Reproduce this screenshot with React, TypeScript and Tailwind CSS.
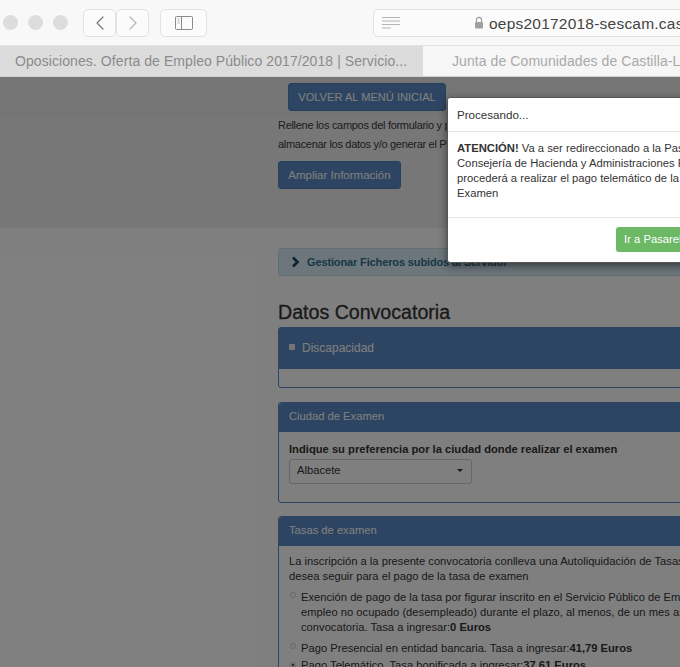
import React from 'react';
import { ChevronLeft, ChevronRight } from 'lucide-react';

const font = { fontFamily: '"Liberation Sans", Arial, sans-serif' };

const BrowserBar: React.FC = () => (
  <div className="flex items-center h-[46px] bg-[#f8f8f8] pl-[3px] border-b border-[#e4e4e4]">
    {/* Traffic lights */}
    <div className="flex gap-[10px] shrink-0">
      <span className="w-[15px] h-[15px] rounded-full bg-[#dddddd]" />
      <span className="w-[15px] h-[15px] rounded-full bg-[#dddddd]" />
      <span className="w-[15px] h-[15px] rounded-full bg-[#dddddd]" />
    </div>

    {/* Back / forward */}
    <div className="flex ml-[15px] shrink-0">
      <div className="w-[33px] h-[28px] flex items-center justify-center border border-[#e2e2e2] rounded-[5px] bg-[#fbfbfb]">
        <ChevronLeft className="w-[24px] h-[24px] text-[#777777]" strokeWidth={1.2} />
      </div>
      <div className="w-[33px] h-[28px] flex items-center justify-center border border-[#e2e2e2] rounded-[5px] bg-[#fbfbfb]">
        <ChevronRight className="w-[24px] h-[24px] text-[#b5b5b5]" strokeWidth={1.2} />
      </div>
    </div>

    {/* Sidebar toggle */}
    <div className="w-[47px] h-[28px] ml-[11px] shrink-0 flex items-center justify-center border border-[#e2e2e2] rounded-[5px] bg-[#fbfbfb]">
      <svg width="20" height="16" viewBox="0 0 20 16" fill="none">
        <rect x="1.5" y="1.5" width="17" height="13" rx="1" stroke="#8a8a8a" />
        <path d="M7.5 1.5v13" stroke="#8a8a8a" />
        <path d="M3.5 4h2M3.5 6h2M3.5 8h2" stroke="#b0b0b0" />
      </svg>
    </div>

    {/* Address field */}
    <div className="flex items-center ml-[166px] w-[340px] shrink-0 h-[28px] border border-[#e2e2e2] rounded-[5px] bg-[#fbfbfb]">
      <svg className="ml-[8px] shrink-0" width="19" height="14" viewBox="0 0 19 14" fill="none">
        <path d="M0 1.5h18M0 5h18M0 8.5h18M0 12h9" stroke="#b4b4b4" />
      </svg>
      <svg className="ml-[73px] shrink-0" width="10" height="13" viewBox="0 0 10 13" fill="none">
        <path d="M2.5 6V3.8a2.5 2.5 0 0 1 5 0V6" stroke="#a0a0a0" strokeWidth="1.2" />
        <rect x="1" y="6" width="8" height="6.5" rx="1" fill="#a0a0a0" />
      </svg>
      <span className="ml-[5px] pt-[2px] text-[15.5px] tracking-[0.22px] text-[#444444] whitespace-nowrap">oeps20172018-sescam.castillalamancha.es</span>
    </div>
  </div>
);

const Tabs: React.FC = () => (
  <div className="flex h-[31px] bg-[#dcdcdc] border-b border-[#d0d0d0]">
    <div className="w-[423px] shrink-0 flex items-center pl-[15px] pt-[1px] text-[14px] tracking-[0.08px] text-[#8b8b8b] whitespace-nowrap">
      Oposiciones. Oferta de Empleo Público 2017/2018 | Servicio...
    </div>
    <div className="flex-1 flex items-center pl-[29px] pt-[1px] bg-[#f6f6f6] text-[14px] tracking-[0.08px] text-[#a9a9a9] whitespace-nowrap overflow-hidden">
      Junta de Comunidades de Castilla-La Mancha
    </div>
  </div>
);

const PanelHeading: React.FC<{ title: string }> = ({ title }) => (
  <div className="h-[29px] flex items-center pl-[10px] pb-[2px] bg-[#5b8bc4] text-white text-[11.2px] rounded-t-[3px]">{title}</div>
);

const Page: React.FC = () => (
  <div className="relative flex-1 overflow-hidden bg-white text-[#333333] text-[11.2px]">
    {/* Top strip + intro block */}
    <div className="bg-[#eeeeee] h-[151px]">
      <div className="h-[39px] pt-[6px] pl-[288px] bg-[#ebebeb]">
        <button className="h-[28px] w-[158px] rounded-[3px] bg-[#5b8bc4] border border-[#4d7fbd] text-white text-[11.1px]">
          VOLVER AL MENÚ INICIAL
        </button>
      </div>
      <div className="pl-[278px] w-[1000px] text-[#3a3a3a] text-[11px] tracking-[-0.3px] leading-[19px]">
        <p>Rellene los campos del formulario y pulse los botones de la parte inferior para</p>
        <p>almacenar los datos y/o generar el PDF de la solicitud</p>
        <button className="mt-[7px] h-[28px] w-[123px] rounded-[3px] bg-[#5b8bc4] border border-[#4d7fbd] text-white text-[11.5px] tracking-normal">
          Ampliar Información
        </button>
      </div>
    </div>

    <div className="pl-[278px] w-[1000px]">
      {/* Collapsible files bar */}
      <div className="mt-[20px] h-[28px] w-[700px] flex items-center pl-[12px] bg-[#d9edf7] border border-[#bcdff1] rounded-[3px] text-[#31708f] font-bold text-[11px] tracking-[-0.13px]">
        <svg className="shrink-0" width="10" height="12" viewBox="0 0 10 12" fill="none">
          <path d="M2 1.5 6.5 6 2 10.5" stroke="#1f4763" strokeWidth="2.6" />
        </svg>
        <span className="ml-[6px]">Gestionar Ficheros subidos al Servidor</span>
      </div>

      <h2 className="mt-[25px] text-[19.6px] leading-[23px] font-medium text-[#333333] [-webkit-text-stroke:0.3px]">Datos Convocatoria</h2>

      {/* Discapacidad */}
      <div className="mt-[3px] w-[700px] h-[61px] border border-[#5b8bc4] rounded-[3px] bg-white">
        <div className="h-[41px] flex items-center pl-[10px] pb-[2px] bg-[#5b8bc4] text-white text-[12px]">
          <span className="w-[6px] h-[6px] rounded-[1px] bg-[#e8e8e8] -mt-[1px]" />
          <span className="ml-[7px]">Discapacidad</span>
        </div>
      </div>

      {/* Ciudad de examen */}
      <div className="mt-[14px] w-[700px] h-[101px] border border-[#5b8bc4] rounded-[3px] bg-white">
        <PanelHeading title="Ciudad de Examen" />
        <div className="pl-[10px] pt-[9px]">
          <p className="font-bold text-[#333333] leading-[16px]">Indique su preferencia por la ciudad donde realizar el examen</p>
          <div className="mt-[2px] w-[183px] h-[25px] flex items-center justify-between pl-[7px] pr-[8px] pb-[2px] border border-[#cccccc] rounded-[3px] bg-white">
            <span>Albacete</span>
            <span className="w-0 h-0 border-x-[3px] border-x-transparent border-t-[3px] border-t-[#333333]" />
          </div>
        </div>
      </div>

      {/* Tasas de examen */}
      <div className="mt-[13px] w-[800px] border border-[#5b8bc4] rounded-[3px] bg-white">
        <PanelHeading title="Tasas de examen" />
        <div className="pl-[10px] pt-[8px] leading-[15px]">
          <p>La inscripción a la presente convocatoria conlleva una Autoliquidación de Tasas. Seleccione la forma que</p>
          <p>desea seguir para el pago de la tasa de examen</p>
          <div className="mt-[6px] flex">
            <span className="w-[6px] h-[6px] mt-[2px] ml-[1px] rounded-full border border-[#cfcfcf] bg-white shrink-0" />
            <div className="ml-[5px]">
              <p>Exención de pago de la tasa por figurar inscrito en el Servicio Público de Empleo como demandante de</p>
              <p>empleo no ocupado (desempleado) durante el plazo, al menos, de un mes anterior a la fecha de la</p>
              <p>convocatoria. Tasa a ingresar:<b>0 Euros</b></p>
            </div>
          </div>
          <div className="mt-[6px] flex">
            <span className="w-[6px] h-[6px] mt-[2px] ml-[1px] rounded-full border border-[#cfcfcf] bg-white shrink-0" />
            <p className="ml-[5px]">Pago Presencial en entidad bancaria. Tasa a ingresar:<b>41,79 Euros</b></p>
          </div>
          <div className="mt-[2px] flex">
            <span className="w-[6px] h-[6px] mt-[4px] ml-[1px] rounded-full border-[2px] border-[#dddddd] bg-[#333333] shrink-0" />
            <p className="ml-[5px]">Pago Telemático. Tasa bonificada a ingresar:<b>37,61 Euros</b></p>
          </div>
        </div>
      </div>
    </div>

    {/* Modal backdrop */}
    <div className="absolute inset-0 bg-black/50" />

    {/* Modal */}
    <div className="absolute left-[447px] top-[20px] w-[500px] h-[166px] bg-white rounded-[3px] border border-[#555555] shadow-[0_3px_9px_rgba(0,0,0,0.5)] text-[#333333]">
      <div className="h-[34px] flex items-center pl-[9px] border-b border-[#e5e5e5] text-[11.6px] font-medium">Procesando...</div>
      <div className="h-[86px] pl-[9px] pt-[9px] border-b border-[#e5e5e5] leading-[15px] text-[11.25px]">
        <p><b>ATENCIÓN!</b> Va a ser redireccionado a la Pasarela de Pagos de la</p>
        <p>Consejería de Hacienda y Administraciones Públicas, donde se</p>
        <p>procederá a realizar el pago telemático de la Tasa de Derechos de</p>
        <p>Examen</p>
      </div>
      <div className="pt-[9px] pl-[168px]">
        <button className="h-[25px] w-[130px] whitespace-nowrap text-left pl-[8px] rounded-[3px] bg-[#6cb865] text-white text-[11.25px]">Ir a Pasarela de Pago</button>
      </div>
    </div>
  </div>
);

const App: React.FC = () => {
  return (
    <div className="w-[680px] h-[667px] flex flex-col overflow-hidden" style={font}>
      <BrowserBar />
      <Tabs />
      <Page />
    </div>
  );
};

export default App;
